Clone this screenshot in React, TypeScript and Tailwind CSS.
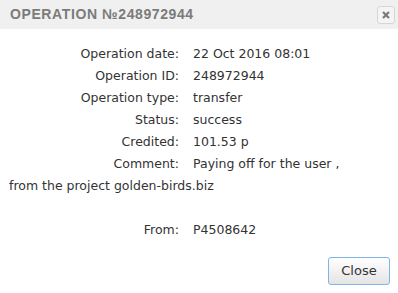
export default function App() {
  const rows: [string, string][] = [
    ['Operation date:', '22 Oct 2016 08:01'],
    ['Operation ID:', '248972944'],
    ['Operation type:', 'transfer'],
    ['Status:', 'success'],
    ['Credited:', '101.53 р'],
  ]

  return (
    <div className="w-[398px] h-[293px] bg-white font-['DejaVu_Sans',sans-serif] text-[#333]">
      <div className="h-[29px] bg-[#f0f0f0] flex items-center justify-between pl-[10px] pr-[3px]">
        <span className="font-['Liberation_Sans',sans-serif] text-[14px] font-bold tracking-[0.6px] text-[#7b7b7b]">
          OPERATION №248972944
        </span>
        <button className="w-[18px] h-[18px] border border-[#d6d6d6] rounded-[3px] bg-[#f4f4f4] flex items-center justify-center">
          <svg width="8" height="8" viewBox="0 0 8 8">
            <path d="M1 1 L7 7 M7 1 L1 7" stroke="#7a7a7a" strokeWidth="2.2" />
          </svg>
        </button>
      </div>

      <div className="pt-[14px] text-[12.5px] leading-[22px]">
        {rows.map(([label, value]) => (
          <div key={label} className="flex">
            <span className="w-[179px] text-right">{label}</span>
            <span className="pl-[14px]">{value}</span>
          </div>
        ))}
        <div className="flex">
          <span className="w-[179px] text-right">Comment:</span>
          <span className="pl-[14px]">Paying off for the user ,</span>
        </div>
        <div className="pl-[9px]">from the project golden-birds.biz</div>
        <div className="h-[22px]" />
        <div className="flex">
          <span className="w-[179px] text-right">From:</span>
          <span className="pl-[14px]">P4508642</span>
        </div>
      </div>

      <div className="flex justify-end pr-[8px] pt-[16px]">
        <button className="w-[62px] h-[28px] border border-[#80b3e8] rounded-[3px] bg-gradient-to-b from-white to-[#e4e4e4] text-[13px] text-[#333] font-['DejaVu_Sans',sans-serif]">
          Close
        </button>
      </div>
    </div>
  )
}
